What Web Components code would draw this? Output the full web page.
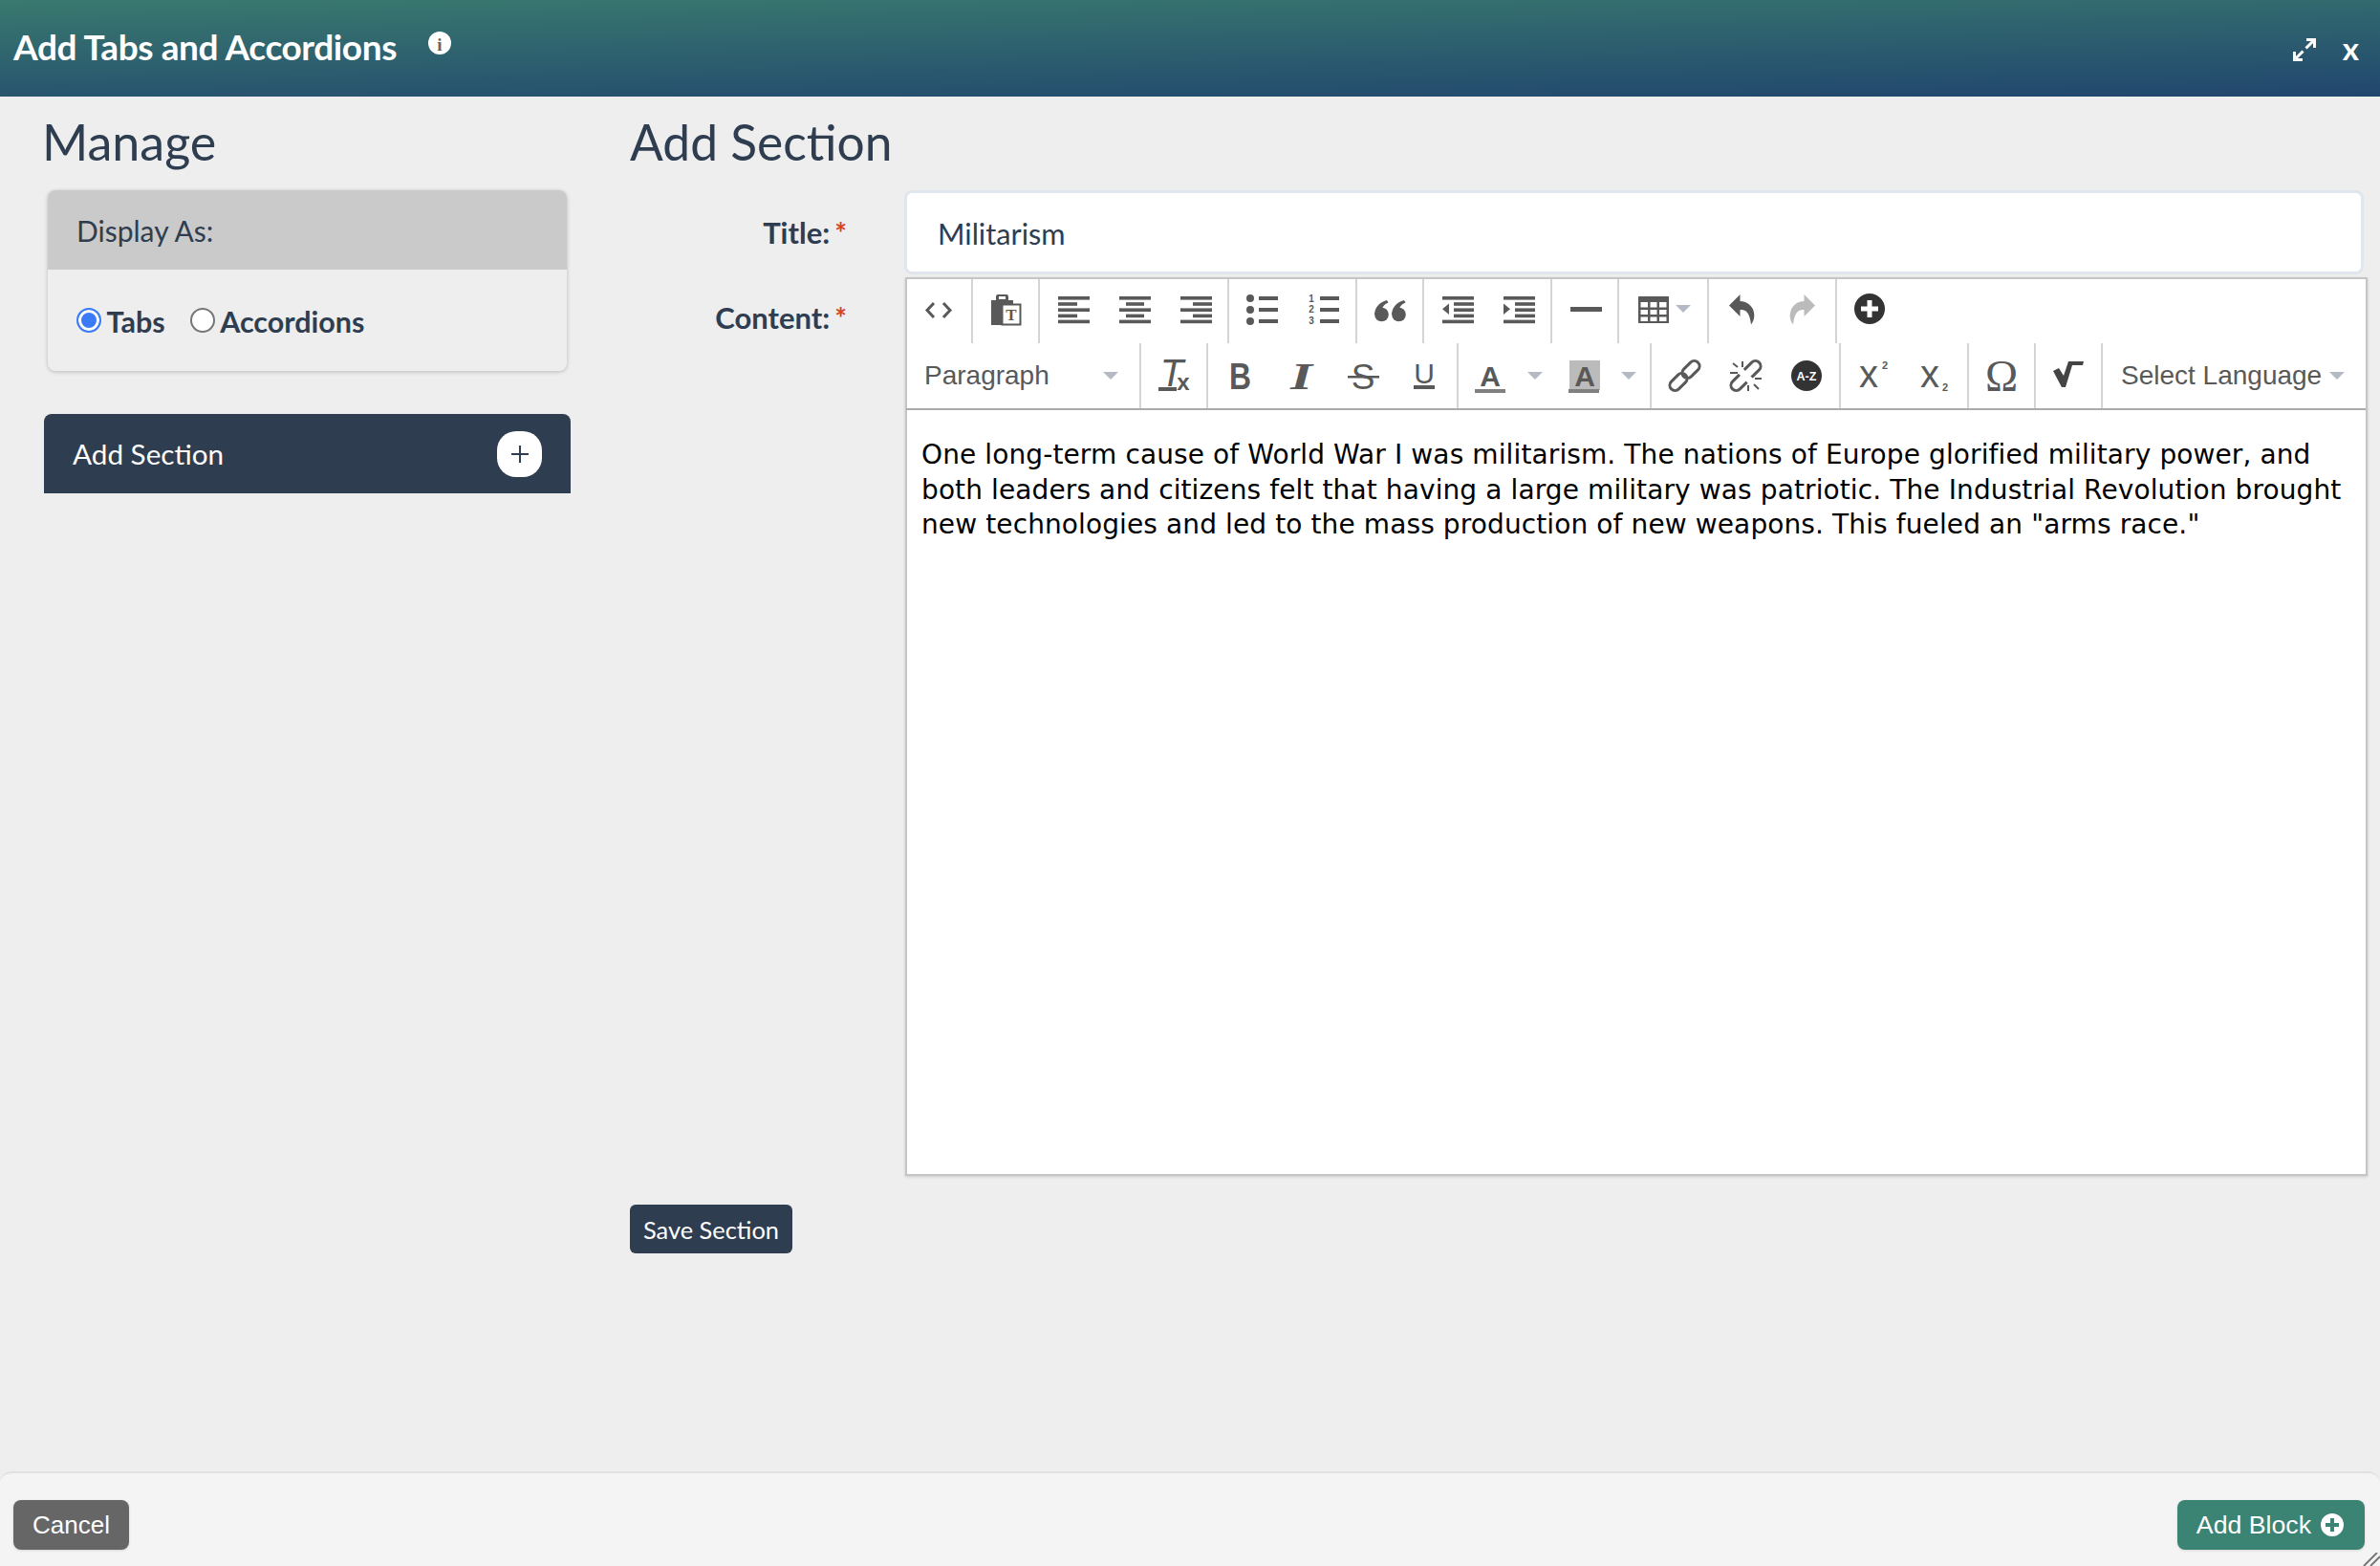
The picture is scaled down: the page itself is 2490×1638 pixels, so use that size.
<!DOCTYPE html>
<html>
<head>
<meta charset="utf-8">
<title>Add Tabs and Accordions</title>
<style>
html, body { margin: 0; height: 100%; }
body { background: #eee; font-family: Lato, sans-serif; color: #2f3d50; overflow: hidden; }
</style>
</head>
<body>
<block-modal>
  <modal-header slot="header">Add Tabs and Accordions</modal-header>
  <manage-panel slot="left"></manage-panel>
  <section-form slot="right" title-value="Militarism">
    <rich-editor>One long-term cause of World War I was militarism. The nations of Europe glorified military power, and both leaders and citizens felt that having a large military was patriotic. The Industrial Revolution brought new technologies and led to the mass production of new weapons. This fueled an "arms race."</rich-editor>
  </section-form>
  <modal-footer slot="footer"></modal-footer>
</block-modal>

<script>
const rows = (ys, h, parts) => ys.map((y, i) => {
  const [x, w] = parts[i];
  return `<rect x="${x}" y="${y}" width="${w}" height="${h}"/>`;
}).join('');
const RY = [3, 9.2, 15.4, 21.6, 27.6];
const SANS = 'font-family="Liberation Sans"';
const SERIF = 'font-family="Liberation Serif"';
const LINKS = `<rect x="-10.500" y="-5.500" width="21" height="11" rx="5.500" transform="translate(23 9.500) rotate(-45)"/>
  <rect x="-10.500" y="-5.500" width="21" height="11" rx="5.500" transform="translate(10 22.500) rotate(-45)"/>`;

const ICONS = {
  code: `<path d="M11 10 4 17.5 11 25M21 10 28 17.5 21 25" fill="none" stroke="currentColor" stroke-width="3"/>`,
  paste: `<path d="M1 7h5V3q0-2 2-2h9q2 0 2 2v4h5v26H1z"/><rect x="9" y="3" width="7" height="3" fill="#fff"/>
    <rect x="12.5" y="11.5" width="19" height="21" fill="#fff" stroke="currentColor" stroke-width="2"/>
    <text x="22" y="28" text-anchor="middle" font-size="17" font-weight="700" ${SERIF}>T</text>`,
  alignleft: rows(RY, 3.6, [[1,33],[1,20],[1,33],[1,20],[1,33]]),
  aligncenter: rows(RY, 3.6, [[1,33],[8,19],[1,33],[8,19],[1,33]]),
  alignright: rows(RY, 3.6, [[1,33],[14,20],[1,33],[14,20],[1,33]]),
  bullist: `<circle cx="4" cy="5" r="4"/><circle cx="4" cy="17" r="4"/><circle cx="4" cy="29" r="4"/>
    <rect x="13" y="3" width="20" height="4"/><rect x="13" y="15" width="20" height="4"/><rect x="13" y="27" width="20" height="4"/>`,
  numlist: `<text x="4" y="9" text-anchor="middle" font-size="10" font-weight="700" ${SANS}>1</text>
    <text x="4" y="20" text-anchor="middle" font-size="10" font-weight="700" ${SANS}>2</text>
    <text x="4" y="32" text-anchor="middle" font-size="10" font-weight="700" ${SANS}>3</text>
    <rect x="13" y="3" width="20" height="4"/><rect x="13" y="15" width="20" height="4"/><rect x="13" y="27" width="20" height="4"/>`,
  quote: `<circle cx="7.500" cy="22" r="7.300"/><path d="M.2 22C0 15 5 9 13 7l1.500 2.500C10 11.500 8 14 8 18L3 24z"/>
    <g transform="translate(18 0)"><circle cx="7.500" cy="22" r="7.300"/><path d="M.2 22C0 15 5 9 13 7l1.500 2.500C10 11.500 8 14 8 18L3 24z"/></g>`,
  outdent: rows(RY, 3.6, [[1,33],[13,21],[13,21],[13,21],[1,33]]) + `<path d="M8 10.500V22L1 16.300z"/>`,
  indent: rows(RY, 3.6, [[1,33],[13,21],[13,21],[13,21],[1,33]]) + `<path d="M1 10.500V22L8 16.300z"/>`,
  hr: `<rect x="1" y="14" width="33" height="5"/>`,
  table: `<path d="M0 3h32v28H0zM2.500 9v5.500H10V9zm10 0v5.500H19.500V9zm9.500 0v5.500h7.500V9zM2.500 17v5H10v-5zm10 0v5h7v-5zm9.500 0v5h7.500v-5zM2.500 24.500V29H10v-4.500zm10 0V29h7v-4.500zm9.500 0V29h7.500v-4.500z"/>`,
  undo: `<path d="M14.500 1 3 12.500 14.500 24v-7c6 0 10 2 11.500 15.500 4-5 4-11 2-16-2.500-5-7-8-13.500-8.500z"/>`,
  redo: `<path d="M17.500 1 29 12.500 17.500 24v-7c-6 0-10 2-11.500 15.500-4-5-4-11-2-16 2.500-5 7-8 13.500-8.500z"/>`,
  plus: `<circle cx="16" cy="16" r="16" fill="#333"/><path d="M13.500 7h5v6.500H25v5h-6.500V25h-5v-6.500H7v-5h6.500z" fill="#fff"/>`,
  removeformat: `<text x="14" y="27" text-anchor="middle" font-size="40" font-style="italic" ${SANS}>T</text>
    <rect x="0" y="28" width="19" height="4"/>
    <text x="26" y="31" text-anchor="middle" font-size="24" font-weight="700" ${SANS}>x</text>`,
  bold: `<text x="4" y="30" font-size="38" font-weight="700" textLength="23" lengthAdjust="spacingAndGlyphs" ${SANS}>B</text>`,
  italic: `<text x="4" y="30" font-size="39" font-weight="700" font-style="italic" textLength="23" lengthAdjust="spacingAndGlyphs" ${SERIF}>I</text>`,
  strike: `<text x="16" y="30" text-anchor="middle" font-size="37" ${SANS}>S</text><rect x="0" y="16" width="33" height="2.500"/>`,
  underline: `<text x="16" y="24" text-anchor="middle" font-size="30" ${SANS}>U</text><rect x="5" y="26" width="22" height="4"/>`,
  forecolor: `<text x="16" y="27" text-anchor="middle" font-size="30" font-weight="700" ${SANS}>A</text><rect x="0" y="30" width="32" height="4" fill="#808080"/>`,
  backcolor: `<rect x="0" y="0" width="32" height="31" fill="#bbb"/><text x="16" y="27" text-anchor="middle" font-size="30" font-weight="700" ${SANS}>A</text><rect x="-1" y="30" width="32" height="4" fill="#808080"/>`,
  link: `<g fill="none" stroke="currentColor" stroke-width="3">${LINKS}</g>`,
  unlink: `<g fill="none" stroke="currentColor" stroke-width="3">${LINKS}</g>
    <path d="M9.500 9.500 23 23" stroke="#fff" stroke-width="7"/>
    <path d="M3 3l5 4M13 1v6M0 13h8M25 25l5 5M19 26v6M26 19h7" stroke="currentColor" stroke-width="2" fill="none"/>`,
  az: `<circle cx="16" cy="16" r="16" fill="#333"/><text x="16" y="20.500" text-anchor="middle" font-size="12.500" font-weight="700" fill="#fff" ${SANS}>A-Z</text>`,
  sup: `<text x="11" y="28" text-anchor="middle" font-size="40" ${SANS}>x</text><text x="28" y="9" text-anchor="middle" font-size="11" font-weight="700" ${SANS}>2</text>`,
  sub: `<text x="11" y="28" text-anchor="middle" font-size="40" ${SANS}>x</text><text x="27" y="32" text-anchor="middle" font-size="11" font-weight="700" ${SANS}>2</text>`,
  omega: `<text x="16" y="32" text-anchor="middle" font-size="46" ${SERIF}>Ω</text>`,
  sqrt: `<path d="M0 11l6-3 5 8 5-15h16l-1 4H20l-7 23H9z" fill="#444"/>`,
};

class ToolBtn extends HTMLElement {
  constructor() {
    super();
    this.attachShadow({ mode: 'open' });
    const name = this.getAttribute('icon');
    const off = this.hasAttribute('off');
    this.shadowRoot.innerHTML = `
      <style>
      :host { display: flex; align-items: center; justify-content: center; width: 64px; flex: none; color: ${off ? '#bbb' : '#595959'}; }
      svg { width: 32px; height: 32px; overflow: visible; fill: currentColor; display: block; }
      </style>
      <svg viewBox="0 0 32 32">${ICONS[name]}</svg>`;
  }
}
customElements.define('tool-btn', ToolBtn);

class ToolCaret extends HTMLElement {
  constructor() {
    super();
    this.attachShadow({ mode: 'open' });
    this.shadowRoot.innerHTML = `
      <style>
      :host { display: block; flex: none; width: 0; height: 0; border: 8px solid transparent; border-bottom: 0; border-top-color: #b4bac3; }
      </style>`;
  }
}
customElements.define('tool-caret', ToolCaret);

class ToolSplit extends HTMLElement {
  constructor() {
    super();
    this.attachShadow({ mode: 'open' });
    const name = this.getAttribute('icon');
    this.shadowRoot.innerHTML = `
      <style>
      :host { display: flex; align-items: center; flex: none; color: #595959; width: ${this.getAttribute('w')}px; padding-left: ${this.getAttribute('pad')}px; box-sizing: border-box; gap: ${this.getAttribute('gap')}px; }
      svg { width: 32px; height: 32px; overflow: visible; fill: currentColor; display: block; flex: none; }
      </style>
      <svg viewBox="0 0 32 32">${ICONS[name]}</svg><tool-caret></tool-caret>`;
  }
}
customElements.define('tool-split', ToolSplit);

class ToolSelect extends HTMLElement {
  constructor() {
    super();
    this.attachShadow({ mode: 'open' });
    this.shadowRoot.innerHTML = `
      <style>
      :host { display: flex; align-items: center; font: 28px "Liberation Sans", Arial, sans-serif; color: #595959; padding-left: 17px; }
      span { flex: 1; white-space: nowrap; }
      </style>
      <span><slot></slot></span><tool-caret></tool-caret>`;
  }
}
customElements.define('tool-select', ToolSelect);

class ToolGroup extends HTMLElement {
  constructor() {
    super();
    this.attachShadow({ mode: 'open' });
    this.shadowRoot.innerHTML = `
      <style>
      :host { display: flex; flex: none; padding: 0 2px; border-right: 2px solid #d4d4d4; }
      :host([last]) { border-right: 0; flex: 1; min-width: 0; }
      ::slotted(tool-select) { flex: 1; }
      </style>
      <slot></slot>`;
  }
}
customElements.define('tool-group', ToolGroup);

class RichEditor extends HTMLElement {
  constructor() {
    super();
    this.attachShadow({ mode: 'open' });
    this.shadowRoot.innerHTML = `
      <style>
      :host { display: flex; flex-direction: column; height: 940px; margin-left: 1px; box-sizing: border-box; background: #fff; border: 2px solid #c5c5c5; box-shadow: 0 1px 3px rgba(0,0,0,.14); }
      .bar { display: flex; margin-left: -1px; }
      .one { height: 67px; }
      .one tool-btn, .one tool-split { padding-bottom: 5px; }
      .two { height: 68px; border-bottom: 2px solid #ababab; box-sizing: content-box; }
      .body { flex: 1; padding: 29px 15px 0; font: 28px/36.500px "DejaVu Sans", Verdana, sans-serif; letter-spacing: .11px; color: #000; }
      </style>
      <div class="bar one">
        <tool-group><tool-btn icon="code"></tool-btn></tool-group>
        <tool-group><tool-btn icon="paste"></tool-btn></tool-group>
        <tool-group><tool-btn icon="alignleft"></tool-btn><tool-btn icon="aligncenter"></tool-btn><tool-btn icon="alignright"></tool-btn></tool-group>
        <tool-group><tool-btn icon="bullist"></tool-btn><tool-btn icon="numlist"></tool-btn></tool-group>
        <tool-group><tool-btn icon="quote"></tool-btn></tool-group>
        <tool-group><tool-btn icon="outdent"></tool-btn><tool-btn icon="indent"></tool-btn></tool-group>
        <tool-group><tool-btn icon="hr"></tool-btn></tool-group>
        <tool-group><tool-split icon="table" w="88" pad="18" gap="7"></tool-split></tool-group>
        <tool-group><tool-btn icon="undo"></tool-btn><tool-btn icon="redo" off></tool-btn></tool-group>
        <tool-group last><tool-btn icon="plus"></tool-btn></tool-group>
      </div>
      <div class="bar two">
        <tool-group style="width:240px"><tool-select style="padding-right:20px">Paragraph</tool-select></tool-group>
        <tool-group><tool-btn icon="removeformat"></tool-btn></tool-group>
        <tool-group><tool-btn icon="bold"></tool-btn><tool-btn icon="italic"></tool-btn><tool-btn icon="strike"></tool-btn><tool-btn icon="underline"></tool-btn></tool-group>
        <tool-group><tool-split icon="forecolor" w="98" pad="15" gap="23"></tool-split><tool-split icon="backcolor" w="98" pad="16" gap="22"></tool-split></tool-group>
        <tool-group><tool-btn icon="link"></tool-btn><tool-btn icon="unlink"></tool-btn><tool-btn icon="az"></tool-btn></tool-group>
        <tool-group><tool-btn icon="sup"></tool-btn><tool-btn icon="sub"></tool-btn></tool-group>
        <tool-group><tool-btn icon="omega"></tool-btn></tool-group>
        <tool-group><tool-btn icon="sqrt"></tool-btn></tool-group>
        <tool-group last><tool-select style="padding-right:20px">Select Language</tool-select></tool-group>
      </div>
      <div class="body"><slot></slot></div>`;
  }
}
customElements.define('rich-editor', RichEditor);

class ModalHeader extends HTMLElement {
  constructor() {
    super();
    this.attachShadow({ mode: 'open' });
    this.shadowRoot.innerHTML = `
      <style>
      :host { display: flex; align-items: center; height: 101px; box-sizing: border-box; padding: 0 22px 0 14px; color: #fff; background: linear-gradient(179deg, #39796f, #21466e); }
      h1 { margin: 0 0 5px; font: 700 37px Lato, sans-serif; letter-spacing: -.4px; }
      .info { margin: -11px 0 0 33px; width: 24px; height: 24px; display: block; }
      .sp { flex: 1; }
      .exp { width: 24px; height: 24px; display: block; margin: 2px 28px 0 0; }
      .x { font: 700 33px/1 Lato, sans-serif; }
      </style>
      <h1><slot></slot></h1>
      <svg class="info" viewBox="0 0 24 24"><circle cx="12" cy="12" r="12" fill="#fff"/><text x="12" y="20" text-anchor="middle" font-size="19" font-weight="700" fill="#666" font-family="Liberation Serif">i</text></svg>
      <span class="sp"></span>
      <svg class="exp" viewBox="0 0 24 24" fill="none" stroke="#fff" stroke-width="3"><path d="M13.500 10.500 22 2M14 1.500h8.500V10M10.500 13.500 2 22M1.500 14v8.500H10"/></svg>
      <span class="x">x</span>`;
  }
}
customElements.define('modal-header', ModalHeader);

class ManagePanel extends HTMLElement {
  constructor() {
    super();
    this.attachShadow({ mode: 'open' });
    this.shadowRoot.innerHTML = `
      <style>
      :host { display: block; width: 551px; }
      h2 { margin: 0 0 0 -2px; height: 81px; font: 400 52px/61px Lato, sans-serif; }
      .card { margin: 0 4px; border-radius: 8px; box-shadow: 0 1px 4px rgba(0,0,0,.22); background: #eee; height: 189px; }
      .head { height: 83px; display: flex; align-items: center; padding-left: 30px; background: #cacaca; border-radius: 8px 8px 0 0; font: 30px Lato, sans-serif; }
      .opts { display: flex; align-items: center; padding: 36px 0 0 30px; font: 700 30.500px Lato, sans-serif; }
      label { display: flex; align-items: center; }
      label + label { margin-left: 26px; }
      input { appearance: none; margin: 0 5.500px 0 0; width: 26px; height: 26px; border-radius: 50%; background: #fff; border: 2px solid #767676; box-sizing: border-box; position: relative; top: -1px; }
      input:checked { border: 2px solid #3b7cf6; background: #3b7cf6; box-shadow: inset 0 0 0 3px #fff; }
      .add { margin-top: 45px; height: 83px; box-sizing: border-box; background: #2f3d50; color: #fff; border-radius: 8px 8px 0 0; display: flex; align-items: center; justify-content: space-between; padding: 0 30px 0 30px; font: 29.700px Lato, sans-serif; }
      .plus { width: 47px; height: 48px; border-radius: 20px; background: #fff; display: flex; align-items: center; justify-content: center; }
      </style>
      <h2>Manage</h2>
      <div class="card">
        <div class="head">Display As:</div>
        <div class="opts">
          <label><input type="radio" name="d" checked>Tabs</label>
          <label><input type="radio" name="d">Accordions</label>
        </div>
      </div>
      <div class="add">Add Section<span class="plus"><svg width="18" height="18" viewBox="0 0 18 18"><path d="M8 0h2v8h8v2h-8v8H8v-8H0V8h8z" fill="#2f3d50"/></svg></span></div>`;
  }
}
customElements.define('manage-panel', ManagePanel);

class SectionForm extends HTMLElement {
  constructor() {
    super();
    this.attachShadow({ mode: 'open' });
    this.shadowRoot.innerHTML = `
      <style>
      :host { display: block; flex: 1; min-width: 0; }
      h2 { margin: 0; height: 81px; font: 400 51.500px/61px Lato, sans-serif; }
      .row { display: grid; grid-template-columns: 227px 1fr; column-gap: 60px; }
      .lab { display: flex; justify-content: flex-end; gap: 5px; font: 700 31px Lato, sans-serif; white-space: nowrap; }
      .lab i { color: #d9431e; font-style: normal; font-size: 30px; position: relative; top: 1px; }
      .inp { margin-right: 4px; height: 88px; box-sizing: border-box; background: #fff; border: 3px solid #dfe6ee; border-radius: 8px; padding: 2px 32px 0; display: flex; align-items: center; font: 30.700px Lato, sans-serif; }
      .r1 .lab { padding-top: 25px; }
      .r2 { margin-top: 3px; }
      .r2 .lab { padding-top: 23px; }
      .btn { display: inline-flex; align-items: center; margin-top: 30px; height: 51px; padding: 0 14px; background: #2f3d50; color: #fff; border-radius: 6px; font: 25.400px Lato, sans-serif; }
      </style>
      <h2>Add Section</h2>
      <div class="row r1"><div class="lab"><span>Title:</span><i>*</i></div><div class="inp">${this.getAttribute('title-value')}</div></div>
      <div class="row r2"><div class="lab"><span>Content:</span><i>*</i></div><div><slot></slot></div></div>
      <div class="btn">Save Section</div>`;
  }
}
customElements.define('section-form', SectionForm);

class ModalFooter extends HTMLElement {
  constructor() {
    super();
    this.attachShadow({ mode: 'open' });
    this.shadowRoot.innerHTML = `
      <style>
      :host { display: flex; justify-content: space-between; align-items: flex-start; height: 99px; box-sizing: border-box; padding: 28px 16px 0 14px; background: #f4f4f4; border-top: 2px solid #e1e1e1; border-radius: 12px 12px 0 0; position: relative; }
      .b { height: 52px; display: flex; align-items: center; border-radius: 8px; color: #fff; font-family: "Liberation Sans", Arial, sans-serif; box-shadow: 0 1px 3px rgba(0,0,0,.12); }
      .cancel { background: #666; padding: 0 20px; font-size: 26px; }
      .add { background: #3b8373; padding: 0 22px 0 20px; gap: 10px; font-size: 26.700px; }
      .grip { position: absolute; right: 0; bottom: 0; width: 18px; height: 14px; }
      </style>
      <div class="b cancel">Cancel</div>
      <div class="b add">Add Block<svg width="24" height="24" viewBox="0 0 24 24"><circle cx="12" cy="12" r="12" fill="#fff"/><path d="M10 5h4v5h5v4h-5v5h-4v-5H5v-4h5z" fill="#3b8373"/></svg></div>
      <svg class="grip" viewBox="0 0 18 14"><path d="M1 14 15 0M8 14 18 4" stroke="#777" stroke-width="2" fill="none"/></svg>`;
  }
}
customElements.define('modal-footer', ModalFooter);

class BlockModal extends HTMLElement {
  constructor() {
    super();
    this.attachShadow({ mode: 'open' });
    this.shadowRoot.innerHTML = `
      <style>
      :host { display: flex; flex-direction: column; height: 100vh; }
      main { flex: 1; display: flex; gap: 62px; padding: 17px 13px 0 46px; min-height: 0; }
      </style>
      <slot name="header"></slot>
      <main><slot name="left"></slot><slot name="right"></slot></main>
      <slot name="footer"></slot>`;
  }
}
customElements.define('block-modal', BlockModal);
</script>
</body>
</html>
